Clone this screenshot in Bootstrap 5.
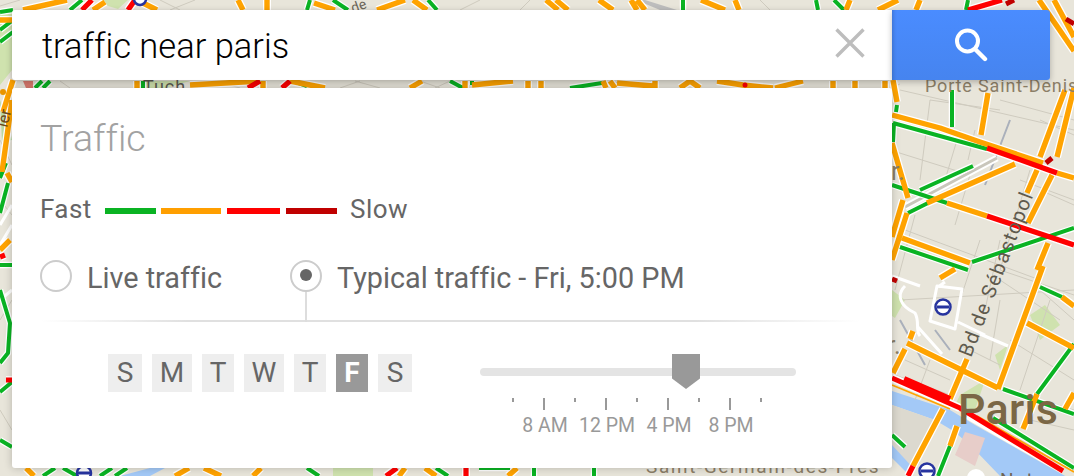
<!DOCTYPE html>
<html lang="en">
<head>
<meta charset="utf-8">
<title>Traffic near Paris</title>
<link href="https://cdn.jsdelivr.net/npm/bootstrap@5.3.0/dist/css/bootstrap.min.css" rel="stylesheet">
<style>
html,body{margin:0;height:100%;overflow:hidden;background:#e8e5da;font-family:Roboto,"Liberation Sans",sans-serif;font-variant-ligatures:none}
.stage{width:1074px;height:476px}
.mapsvg{position:absolute;left:0;top:0;width:1074px;height:476px}
.mapsvg text{font-family:Roboto,"Liberation Sans",sans-serif}
.overlay{padding:10px 24px 0 12px}
.searchrow{height:70px}
.searchbox{width:880px;background:#fff;border-radius:3px 0 0 3px;padding:0 27px 0 30px;box-shadow:0 2px 6px rgba(0,0,0,.28);font-size:34.5px;font-weight:300;color:#000}
.searchtxt{padding-top:3px}
.searchbtn{width:158px;border:0;border-radius:0 3px 3px 0;padding:0;background:linear-gradient(#4a8cff,#4684ef);box-shadow:0 2px 6px rgba(0,0,0,.25),inset 5px 0 4px -4px rgba(0,0,0,.2)}
.searchbtn:hover,.searchbtn:active{background:#4684ef}
.closeic{margin-top:-4px}
.panel{width:880px;height:380px;margin-top:8px;border:0;border-radius:3px;box-shadow:0 0 8px rgba(0,0,0,.22);padding:0 0 0 28px;color:#666}
.paneltitle{font-size:37.5px;font-weight:300;color:#a2a2a2;line-height:40px;margin:30px 0 0;letter-spacing:0}
.legend{font-size:26px;letter-spacing:.4px;line-height:30px;margin-top:36px;height:30px}
.lg{height:6px;margin-top:3px}
.lg1{width:51px;margin-left:13px;background:#0ab323}
.lg2{width:60px;margin-left:5.5px;background:#ff9f00}
.lg3{width:53px;margin-left:5.5px;background:#f00}
.lg4{width:51px;margin-left:6.5px;background:#c00000}
.slowtxt{margin-left:13px}
.modes{font-size:28.8px;margin-top:36px;height:32px;line-height:32px;position:relative}
.ring{width:32px;height:32px;border:2px solid #ccc;border-radius:50%;flex:none;background:#fff}
.ring-on{position:relative}
.ring-on::before{content:"";width:12px;height:12px;border-radius:50%;background:#666;position:absolute;left:8px;top:7px}
.ring-on::after{content:"";width:2px;height:30px;background:#ddd;position:absolute;left:13px;top:30px}
.modelbl{margin-left:15px;padding-top:2px}
.mode1{width:250px}
.divider{height:2px;width:820px;margin-top:28px;background:linear-gradient(90deg,rgba(224,224,224,0),#e0e0e0 18%,#e0e0e0 80%,rgba(224,224,224,0))}
.lower{margin-top:32px;padding-left:68px}
.days{gap:10px;width:372px;height:38px}
.dy{height:38px;line-height:38px;background:#eee;color:#666;font-size:28px;text-align:center}
.dy-on{background:#999;color:#fff;font-weight:700}
.w34{width:34px}.w40{width:40px}.w32{width:32px}
.timeline{width:316px;position:relative;padding-top:14px}
.rail{height:8px;border-radius:4px;background:#e4e4e4}
.thumb{position:absolute;left:192px;top:0;width:28px;height:35px;background:#999;clip-path:polygon(0 0,100% 0,100% 70%,50% 100%,0 70%)}
.ticks{gap:29px;margin:22px 0 0 32px;height:12px}
.tk{width:2px;height:4px;background:#999}
.tk-l{height:12px}
.hours{margin:4px 0 0 34px;font-size:19.5px;line-height:24px;color:#999}
.hr{width:62px;text-align:center;white-space:nowrap}
</style>
</head>
<body>
<div class="stage position-relative overflow-hidden">
<svg class="mapsvg" viewBox="0 0 1074 476" fill="none" stroke-linecap="butt" stroke-linejoin="round" aria-hidden="true">
<defs>
<path id="mo" d="M23 10L67 0M93 10L105 2M143 3L157 10M238 0L243 10M267 0V10M314 3L335 10M377 10L405 0M413 0L427 10M546 0L558 10M556 0L568 10M599 0L613 10M631 0L637 10M637 0L645 10M701 0L725 10M735 0L739 10M850 0L846 10M898 0L878 10M920 0L916 10M1039 0L1074 51M1054 0L1074 37
M0 20H12M13 80L3 112M12 100L2 172M7 173L12 182M0 250L10 240
M137 81V88M190 85L260 81M263 81V88M290 81L325 88M410 88L422 81M465 81V88M472 85L513 81M528 81V88M541 81V88M603 81L606 88M610 81L615 88M617 83L653 86M655 81V88M680 88L690 81L700 88M717 81L743 85L773 88M775 88L803 81M833 81V88M855 81V88M885 81V88
M26 468L34 476M175 476L189 468M204 468L221 476M253 476L261 468M399 476L405 468M425 468L436 476M508 476L517 468
M893 80L897 102M892 115L940 128L980 142L1043 163M1057 173L1074 178M988 93L981 135M1065 90L1040 157M1074 88L1057 157M1037 170L1027 193M1052 175L1028 223M1015 164L927 203M947 203L987 216M892 143L908 198M903 200L892 237M907 213L892 260M902 238L970 263M1048 243L1037 270M940 278L955 269M1043 266L998 389M1027 323L1074 348M1062 297L1074 306M1037 394L1023 429M1074 393L1065 409M907 343L998 388M913 331L910 339M905 349L893 373M967 359L950 399M943 409L913 466M957 426L950 446"/>
<path id="mg" d="M0 12L13 10M0 30L13 20M0 42L13 32M8 183L0 213M0 265H12M0 290L10 323L8 353L0 363M0 392L12 382M0 440L12 447M70 10L82 0M307 10L310 0M333 0L348 10M428 0L437 10M683 0V10M816 0L818 10M834 0L844 10M968 0L966 10M0 178L6 163
M35 88L42 81M43 88L50 81M143 81V88M293 81L307 86M450 81L463 88M472 81V85M570 88L602 83
M43 476L55 468M63 468L77 476M100 476L112 468M115 476L127 468M307 468L319 476M436 468L448 476M479 468L510 468M534 468V476M594 468V476
M897 105L896 112M952 90V127M893 123L987 149M894 123L893 142M973 166L920 190M928 203L908 213M892 185L947 203M972 262L1074 228M900 247L968 270M1040 287L1062 297M1074 344L1037 394M1003 389L1074 414M993 418L1074 468M950 446L938 476M892 435L905 447"/>
<path id="mr" d="M82 10L92 0M128 10L135 0M968 10L1002 0M0 257L5 255M6 380H12M248 88L260 81M282 88L290 81M386 476L397 468M466 468V476M987 148L1057 173M987 216L1074 245M908 476L913 466"/>
<path id="mw" d="M892 276L920 286M905 286C896 295 900 306 915 313C920 322 915 330 920 336M937 286L962 289L955 329L930 321ZM945 282L938 287M917 326L942 354M980 334L1008 346M958 322L985 335M958 266L942 280M0 225L12 205M0 245L12 225M0 300L12 290"/>
</defs>
<rect width="1074" height="476" fill="#e8e5da"/>
<path d="M100 0H128L118 9L108 6ZM0 14L12 12V70L0 85ZM333 468H373V476H333ZM143 81H190L165 88H145ZM892 290L905 300L895 318L892 316ZM1040 340L1060 325L1045 305L1030 315ZM995 355L1008 345L1000 370ZM960 395L985 380L975 410L955 405Z" fill="#cfe2ae"/>
<path d="M892 391L950 410L975 425L1074 481V488L1000 476L975 450L955 432L935 420L892 405ZM892 443L920 462L910 476L892 458ZM120 476L150 468H165L150 476Z" fill="#a3c9f7"/>
<path d="M892 405L935 420L915 470L892 445Z" fill="#dcd9cf"/>
<path d="M965 432L985 438L975 466L955 455Z" fill="#e7cdc9"/>
<path d="M23 81H33V88H26Z" fill="#dc7b6f"/>
<path d="M0 100C4 110 10 130 12 140L2 142Z" fill="#b8d9a4"/>
<path d="M645 0L677 10H660L636 0Z" fill="#bdbdbd"/>
<path d="M625 10H645L640 12H628Z" fill="#5ba1ea"/>
<g stroke="#cfcbbf" stroke-width="1">
<path d="M20 0L0 6M160 0L180 10M170 10L195 0M480 0L460 10M530 0L520 10M760 0L770 10M900 300L1074 290M930 100L920 180M1000 100L1074 120M900 90L1074 130M930 100L1000 110M890 150L970 175M970 175L955 225M1030 170L1000 270M1000 270L1074 295M905 230L1040 280M980 240L960 300M1000 240L985 310M1040 120L1074 135M960 130L945 180M1020 180L1074 200M915 215L895 290M1050 300L1020 390M1074 320L1040 290M1010 340L1074 380M1000 280L1060 320M1000 300L990 360M930 360L915 400M895 375L950 395M960 345L1000 365M905 360L950 380M1040 400L1074 410M1074 430L1030 420M1020 440L1074 470M975 130L968 160M1040 190L1074 205M300 81L320 88M215 81L240 88M60 81L70 88M610 81L640 88M900 84L890 88M355 81L380 88M340 88L360 81M420 81L440 88M435 88L450 81M0 140L12 165M0 410L12 430M0 320L12 300M0 200L12 215"/>
</g>
<g stroke="#aab0bb" stroke-width="2">
<path d="M1010 120L985 185M935 330L950 350M900 320L925 365"/>
</g>
<g stroke="#fff" stroke-width="3"><use href="#mw"/></g>
<path d="M997 158L905 207" stroke="#fff" stroke-width="7"/>
<path d="M997 158L905 207" stroke="#c9c6bb" stroke-width="3"/>
<g stroke="#fff" stroke-width="8"><use href="#mo"/><use href="#mg" stroke-width="6.5"/><use href="#mr"/></g>
<use href="#mg" stroke="#0ab323" stroke-width="4"/>
<use href="#mo" stroke="#ffa300" stroke-width="5.4"/>
<use href="#mr" stroke="#f00" stroke-width="5.2"/>
<path d="M892 378L960 408" stroke="#fff" stroke-width="8"/>
<path d="M967 416L1063 471" stroke="#fff" stroke-width="6"/>
<path d="M892 385L950 409M977 416L1074 472" stroke="#ffa300" stroke-width="1.8"/>
<path d="M892 378L960 408L1063 471" stroke="#f00" stroke-width="5"/>
<path d="M904 379L950 399" stroke="#f00" stroke-width="6"/>
<path d="M1014 0L1006 4M1066 19L1074 24M892 279L897 281M1046 163L1052 158" stroke="#c00000" stroke-width="5"/>
<circle cx="745" cy="85" r="2.5" fill="#f00"/>
<g stroke="#27349f" stroke-width="2.5" fill="#fff"><circle cx="943" cy="307" r="7.5"/><circle cx="84" cy="473" r="7"/><circle cx="927" cy="471" r="7.5"/><circle cx="140" cy="-1" r="6"/></g>
<path d="M937 307H949M78 473H90M921 471H933" stroke="#27349f" stroke-width="3"/>
<circle cx="976" cy="478" r="9" fill="#fff"/>
<circle cx="3" cy="92" r="3" fill="#e99400"/>
<g fill="#7b6745">
<text x="958" y="424" font-size="43" letter-spacing=".3" font-weight="500">Paris</text>
</g>
<g fill="#8b7e67">
<text x="925" y="92" font-size="18" letter-spacing=".85">Porte Saint-Denis</text>
<text x="646" y="473" font-size="19" letter-spacing="1.6">Saint-Germain-des-Prés</text>
<text x="891" y="180" font-size="25">r.</text>
<text x="887" y="354" font-size="25">r.</text>
</g>
<text x="1000" y="486" font-size="19" fill="#6e6455" letter-spacing="1">Notre</text>
<text x="143" y="93" font-size="18" fill="#5c5a52" letter-spacing="1">Tuch</text>
<text transform="translate(971 358) rotate(-69)" font-size="20" fill="#5f5a4d" letter-spacing="1.2">Bd de Sébastopol</text>
<text transform="translate(7 128) rotate(-76)" font-size="16" fill="#6f4a1d">ler</text>
<text transform="translate(353 13) rotate(-20)" font-size="14" fill="#6b6558">de</text>
</svg>

<div class="overlay position-relative">
<div class="searchrow d-flex">
<div class="searchbox d-flex justify-content-between align-items-center">
<span class="searchtxt">traffic near paris</span>
<svg class="closeic" width="30" height="30" viewBox="0 0 30 30" aria-hidden="true"><path d="M1.5 1.5L28.5 28.5M28.5 1.5L1.5 28.5" stroke="#bdbdbd" stroke-width="3.4" fill="none"/></svg>
</div>
<button class="btn searchbtn d-flex align-items-center justify-content-center" type="button" aria-label="Search">
<svg width="34" height="34" viewBox="0 0 34 34" aria-hidden="true"><circle cx="13.5" cy="13" r="10.5" stroke="#fff" stroke-width="4" fill="none"/><path d="M21 21L31 31" stroke="#fff" stroke-width="4.4" stroke-linecap="round" fill="none"/></svg>
</button>
</div>

<div class="card panel">
<h2 class="paneltitle">Traffic</h2>
<div class="legend d-flex align-items-center">
<span>Fast</span><span class="lg lg1"></span><span class="lg lg2"></span><span class="lg lg3"></span><span class="lg lg4"></span><span class="slowtxt">Slow</span>
</div>
<div class="modes d-flex">
<div class="mode1 d-flex"><span class="ring"></span><span class="modelbl">Live traffic</span></div>
<div class="d-flex"><span class="ring ring-on"></span><span class="modelbl">Typical traffic - Fri, 5:00 PM</span></div>
</div>
<div class="divider"></div>
<div class="lower d-flex">
<div class="days d-flex">
<span class="dy w34">S</span><span class="dy w40">M</span><span class="dy w32">T</span><span class="dy w40">W</span><span class="dy w32">T</span><span class="dy w32 dy-on">F</span><span class="dy w34">S</span>
</div>
<div class="timeline">
<div class="rail"></div>
<div class="thumb"></div>
<div class="ticks d-flex"><span class="tk"></span><span class="tk tk-l"></span><span class="tk"></span><span class="tk tk-l"></span><span class="tk"></span><span class="tk tk-l"></span><span class="tk"></span><span class="tk tk-l"></span><span class="tk"></span></div>
<div class="hours d-flex"><span class="hr">8 AM</span><span class="hr">12 PM</span><span class="hr">4 PM</span><span class="hr">8 PM</span></div>
</div>
</div>
</div>
</div>
</div>
<script src="https://cdn.jsdelivr.net/npm/bootstrap@5.3.0/dist/js/bootstrap.bundle.min.js"></script>
</body>
</html>
